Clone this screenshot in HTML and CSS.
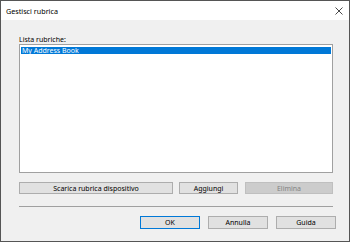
FILE: index.html
```html
<!DOCTYPE html>
<html lang="it">
<head>
  <meta charset="UTF-8">
  <title>Gestisci rubrica</title>
  <link rel="stylesheet" href="styles.css">
</head>
<body>
  <div class="window">
    <div class="titlebar">
      <span class="title">Gestisci rubrica</span>
      <svg class="close" width="8" height="8" viewBox="0 0 8 8">
        <path d="M0.5 0.5 L7.5 7.5 M7.5 0.5 L0.5 7.5" stroke="#333" stroke-width="0.9" fill="none"/>
      </svg>
    </div>
    <div class="content">
      <div class="label">Lista rubriche:</div>
      <div class="listbox">
        <div class="item selected">My Address Book</div>
      </div>
      <div class="actions">
        <button class="btn wide">Scarica rubrica dispositivo</button>
        <button class="btn add">Aggiungi</button>
        <button class="btn del" disabled>Elimina</button>
      </div>
      <div class="separator"></div>
      <div class="footer">
        <button class="btn small default">OK</button>
        <button class="btn small">Annulla</button>
        <button class="btn small">Guida</button>
      </div>
    </div>
  </div>
</body>
</html>
```

FILE: styles.css
```css
body {
  margin: 0;
  font-family: "Noto Sans", "Liberation Sans", sans-serif;
  font-size: 7px;
  color: #000;
}
.window {
  width: 350px;
  height: 242px;
  box-sizing: border-box;
  border: 1px solid #555;
  background: #f0f0f0;
}
.titlebar {
  height: 19px;
  background: #fff;
  display: flex;
  align-items: center;
  justify-content: space-between;
  padding: 0 6px 0 5px;
}
.title {
  font-size: 7.2px;
  margin-top: 1px;
}
.close {
  display: block;
  margin-top: 1px;
}
.content {
  padding: 15px 16px 0 18px;
}
.label {
  line-height: 9px;
  height: 9px;
}
.listbox {
  height: 129px;
  box-sizing: border-box;
  border: 1px solid #a0a0a0;
  background: #fff;
  padding: 2px 1px 0 1px;
}
.item {
  height: 7px;
  line-height: 7px;
  padding-left: 1px;
}
.item.selected {
  background: #0078d7;
  color: #fff;
}
.btn {
  font-family: inherit;
  font-size: 7px;
  line-height: 1;
  padding: 0;
  margin: 0;
  box-sizing: border-box;
  background: #e1e1e1;
  border: 1px solid #adadad;
  color: #000;
}
.btn:disabled {
  background: #cccccc;
  border-color: #bfbfbf;
  color: #838383;
}
.actions {
  display: flex;
  margin-top: 9px;
  height: 12px;
}
.actions .btn {
  height: 12px;
}
.wide {
  width: 154px;
}
.add {
  width: 59px;
  margin-left: 6px;
}
.del {
  width: 88px;
  margin-left: 7px;
}
.separator {
  margin-top: 12px;
  height: 1px;
  background: #a0a0a0;
}
.footer {
  display: flex;
  justify-content: flex-end;
  gap: 8px;
  margin-top: 9px;
  margin-right: -3px;
}
.small {
  width: 60px;
  height: 13px;
}
.default {
  border-color: #0078d7;
}
```
